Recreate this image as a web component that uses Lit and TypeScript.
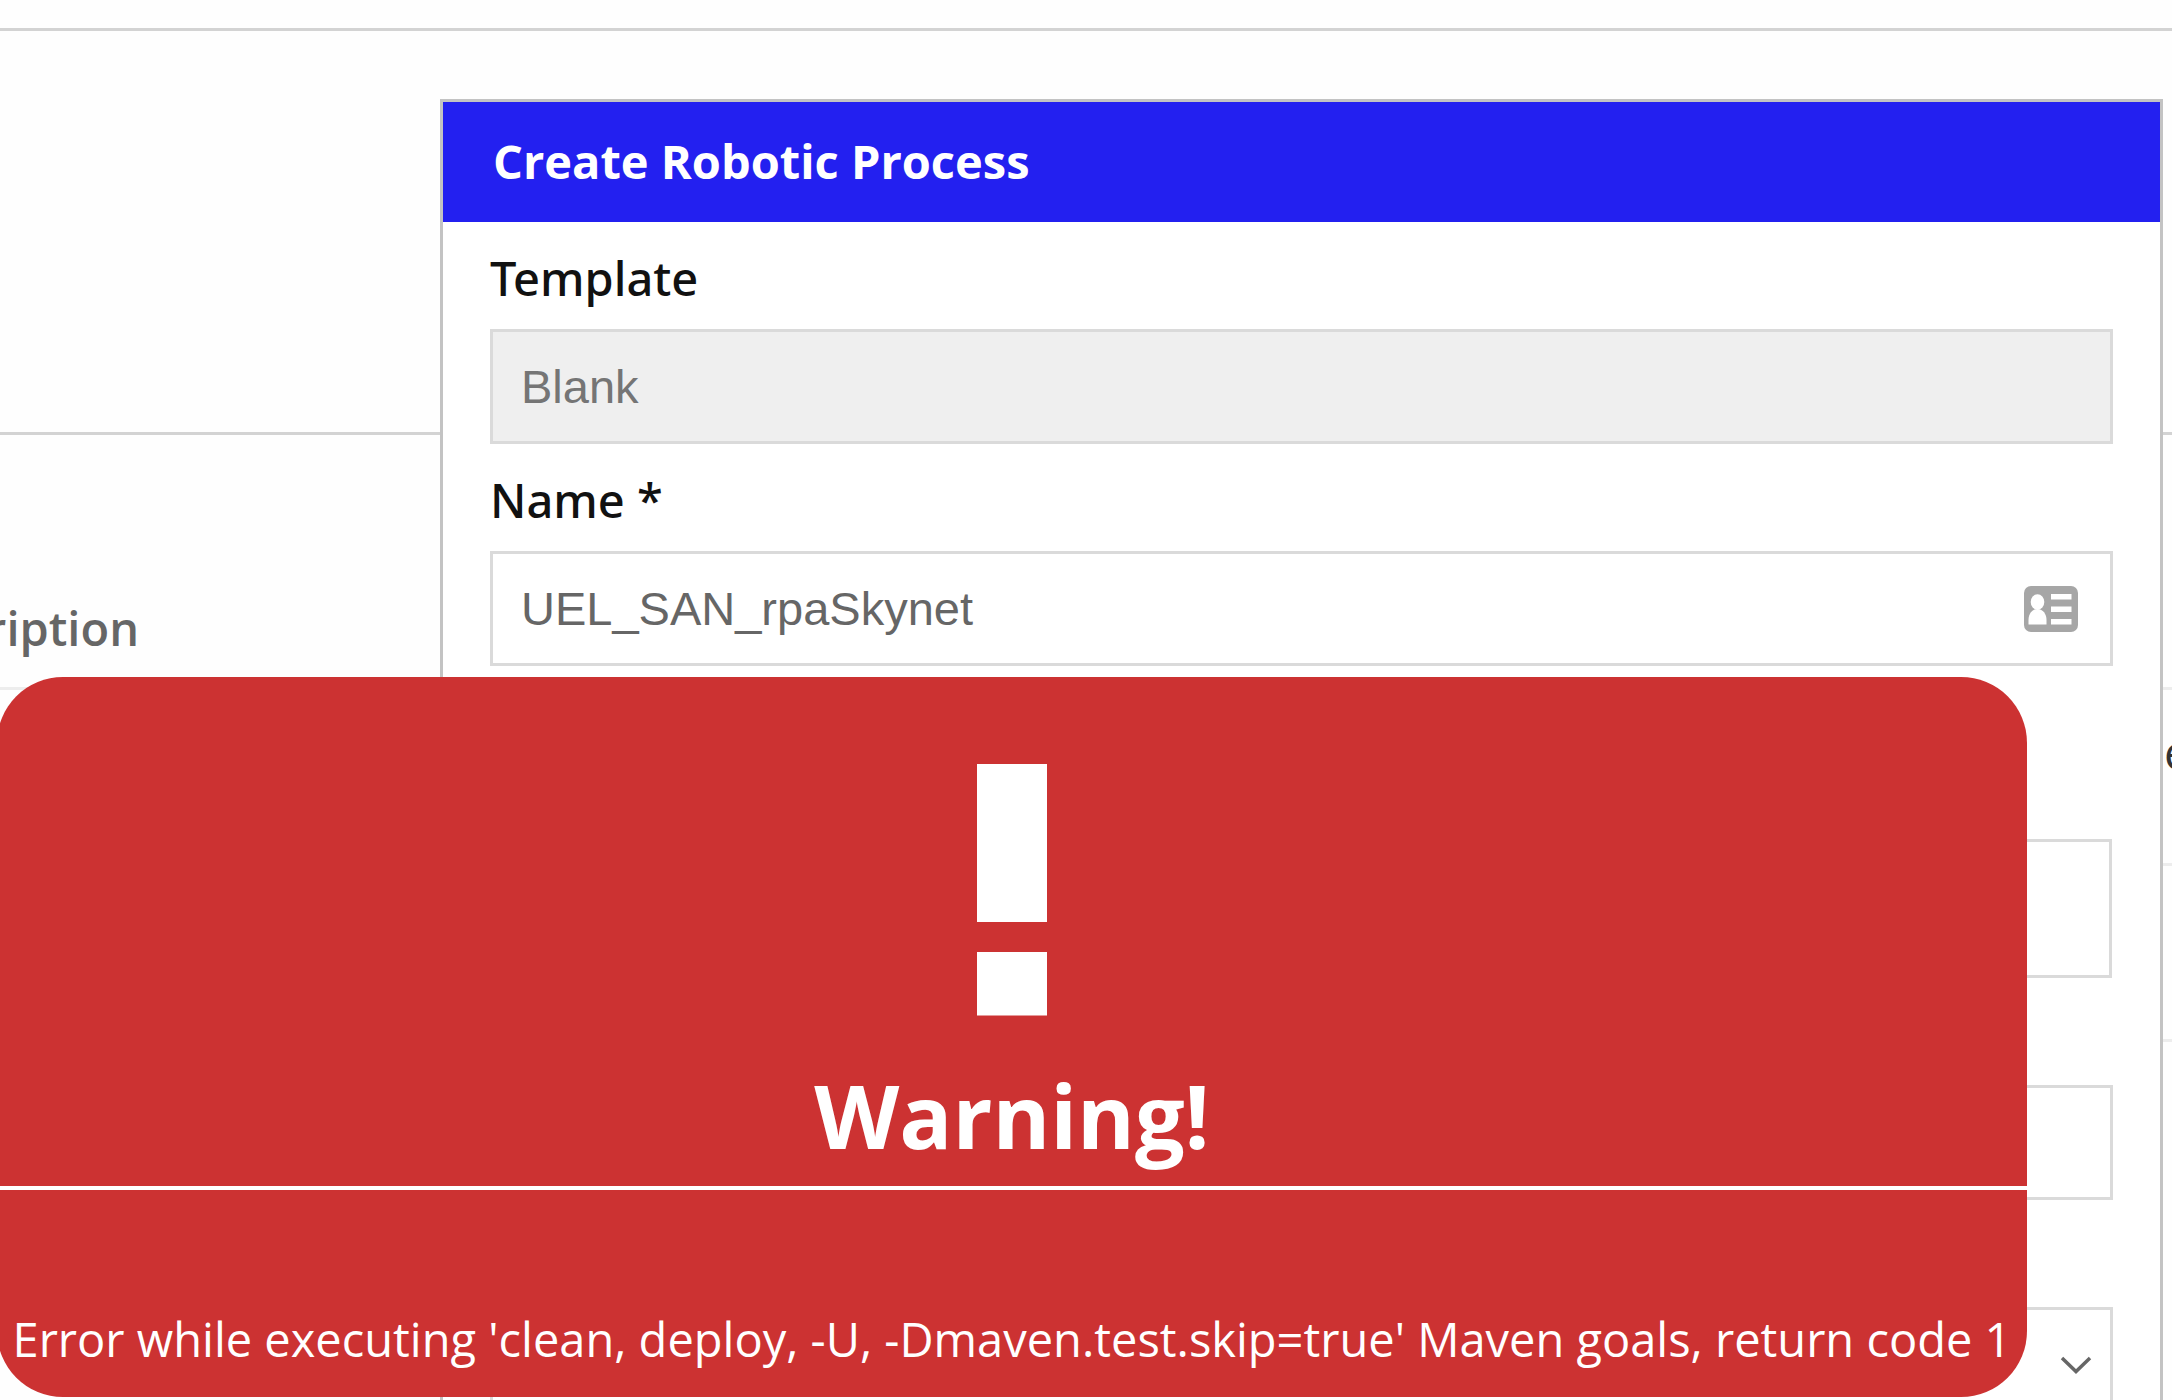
import { LitElement, html, css } from "lit";
import { customElement } from "lit/decorators.js";

@customElement("process-table")
export class ProcessTable extends LitElement {
  static styles = css`
    :host {
      display: block;
      padding-top: 28px;
      font-family: "Open Sans", sans-serif;
      font-size: 47px;
      line-height: 64px;
    }
    .toolbar {
      height: 401px;
      border-top: 3px solid #d3d3d3;
      border-bottom: 3px solid #d3d3d3;
    }
    .table {
      width: 100%;
      table-layout: fixed;
      border-collapse: separate;
      border-spacing: 0;
    }
    .last {
      width: 8px;
    }
    .head,
    .cell {
      box-sizing: border-box;
      padding: 0;
      border-bottom: 3px solid #ededed;
      overflow: hidden;
      text-align: left;
      color: #333;
    }
    .head {
      height: 255px;
      padding-top: 134px;
      font-weight: 600;
      color: #666;
    }
    .cell {
      height: 176px;
      padding-bottom: 50px;
    }
    .clip {
      display: flex;
      justify-content: flex-end;
      width: 139px;
      overflow: hidden;
    }
  `;

  render() {
    return html`
      <div class="toolbar"></div>
      <table class="table">
        <thead>
          <tr>
            <th class="head" scope="col"><div class="clip">Description</div></th>
            <th class="head last" scope="col"></th>
          </tr>
        </thead>
        <tbody>
          <tr>
            <td class="cell"></td>
            <td class="cell last">e</td>
          </tr>
          <tr>
            <td class="cell"></td>
            <td class="cell last"></td>
          </tr>
        </tbody>
      </table>
    `;
  }
}

@customElement("process-dialog")
export class ProcessDialog extends LitElement {
  static styles = css`
    :host {
      display: block;
      box-sizing: border-box;
      border: 3px solid #c3c3c3;
      background: #fff;
      font-family: "Open Sans", sans-serif;
      font-size: 47px;
      line-height: 64px;
      color: #111;
    }
    .title {
      margin: 0;
      padding: 27px 50px 29px;
      background: #2320f0;
      color: #fff;
      font-size: 47px;
      font-weight: 700;
    }
    .form {
      display: flex;
      flex-direction: column;
      padding: 0 47px 48px;
    }
    .label {
      padding: 24px 0 19px;
      font-family: "Noto Sans", "Open Sans", sans-serif;
      font-weight: 500;
    }
    .box {
      display: flex;
      align-items: center;
      box-sizing: border-box;
      height: 115px;
      border: 3px solid #dadada;
      background: #fff;
    }
    .disabled {
      background: #efefef;
    }
    .spaced {
      margin-bottom: 66px;
    }
    .area {
      height: 139px;
      margin-right: 1px;
    }
    .control {
      flex: 1;
      min-width: 0;
      height: 100%;
      box-sizing: border-box;
      margin: 0;
      padding: 0 28px;
      border: 0;
      outline: 0;
      background: none;
      appearance: none;
      resize: none;
      font-family: "Liberation Sans", Arial, sans-serif;
      font-size: 47px;
      color: #666;
    }
    .control:disabled {
      color: #757575;
    }
    .card {
      flex: none;
      margin-right: 32px;
    }
    .chevron {
      flex: none;
      margin-right: 18px;
    }
  `;

  render() {
    return html`
      <h2 class="title">Create Robotic Process</h2>
      <form class="form">
        <label class="label" for="template">Template</label>
        <div class="box disabled">
          <input class="control" id="template" type="text" value="Blank" disabled />
        </div>
        <label class="label" for="name">Name *</label>
        <div class="box spaced">
          <input class="control" id="name" type="text" value="UEL_SAN_rpaSkynet" />
          <svg class="card" width="54" height="46" viewBox="0 0 54 46" aria-hidden="true">
            <rect width="54" height="46" rx="7" fill="#a6a6a6" />
            <ellipse cx="13.5" cy="16" rx="6.8" ry="7.8" fill="#fff" />
            <path d="M4.500 38.500V34C4.500 28 8 23 13.500 23S22.500 28 22.500 34V38.500Z" fill="#fff" />
            <path d="M27 8H47.500V13.500H27ZM27 20.500H47.500V26H27ZM27 33H47.500V38.500H27Z" fill="#fff" />
          </svg>
        </div>
        <label class="label" for="description">Description</label>
        <div class="box area">
          <textarea class="control" id="description"></textarea>
        </div>
        <label class="label" for="version">Version</label>
        <div class="box">
          <input class="control" id="version" type="text" />
        </div>
        <label class="label" for="type">Type</label>
        <div class="box">
          <select class="control" id="type"></select>
          <svg class="chevron" width="32" height="18" viewBox="0 0 32 18" aria-hidden="true">
            <path d="M2 2L16 15.500L30 2" fill="none" stroke="#666" stroke-width="3.500" />
          </svg>
        </div>
      </form>
    `;
  }
}

@customElement("warning-toast")
export class WarningToast extends LitElement {
  static styles = css`
    :host {
      display: flex;
      flex-direction: column;
      align-items: center;
      box-sizing: border-box;
      padding: 87px 0 26px;
      border-radius: 66px;
      background: #cc3232;
      color: #fff;
      font-family: "Open Sans", sans-serif;
      overflow: hidden;
    }
    .mark {
      display: block;
    }
    .heading {
      align-self: stretch;
      margin: 39px 0 117px;
      padding-bottom: 11px;
      border-bottom: 4px solid #fff;
      text-align: center;
      font-size: 88px;
      line-height: 120px;
      font-weight: 700;
    }
    .message {
      margin: 0;
      font-size: 47px;
      line-height: 64px;
      white-space: nowrap;
    }
  `;

  render() {
    return html`
      <svg class="mark" width="70" height="252" viewBox="0 0 70 252" aria-hidden="true">
        <rect width="70" height="158" fill="#fff" />
        <rect y="188" width="70" height="63.500" fill="#fff" />
      </svg>
      <h1 class="heading">Warning!</h1>
      <p class="message">
        Error while executing 'clean, deploy, -U, -Dmaven.test.skip=true' Maven goals, return code 1
      </p>
    `;
  }
}

@customElement("app-root")
export class AppRoot extends LitElement {
  static styles = css`
    :host {
      display: block;
      position: relative;
      box-sizing: border-box;
      height: 100vh;
      overflow: hidden;
      background: #fefefe;
    }
    .dialog {
      position: absolute;
      top: 99px;
      left: 440px;
      right: 9px;
    }
    .toast {
      position: absolute;
      top: 677px;
      left: -3px;
      right: 145px;
    }
  `;

  render() {
    return html`
      <process-table></process-table>
      <process-dialog class="dialog" role="dialog" aria-label="Create Robotic Process"></process-dialog>
      <warning-toast class="toast" role="alert"></warning-toast>
    `;
  }
}
